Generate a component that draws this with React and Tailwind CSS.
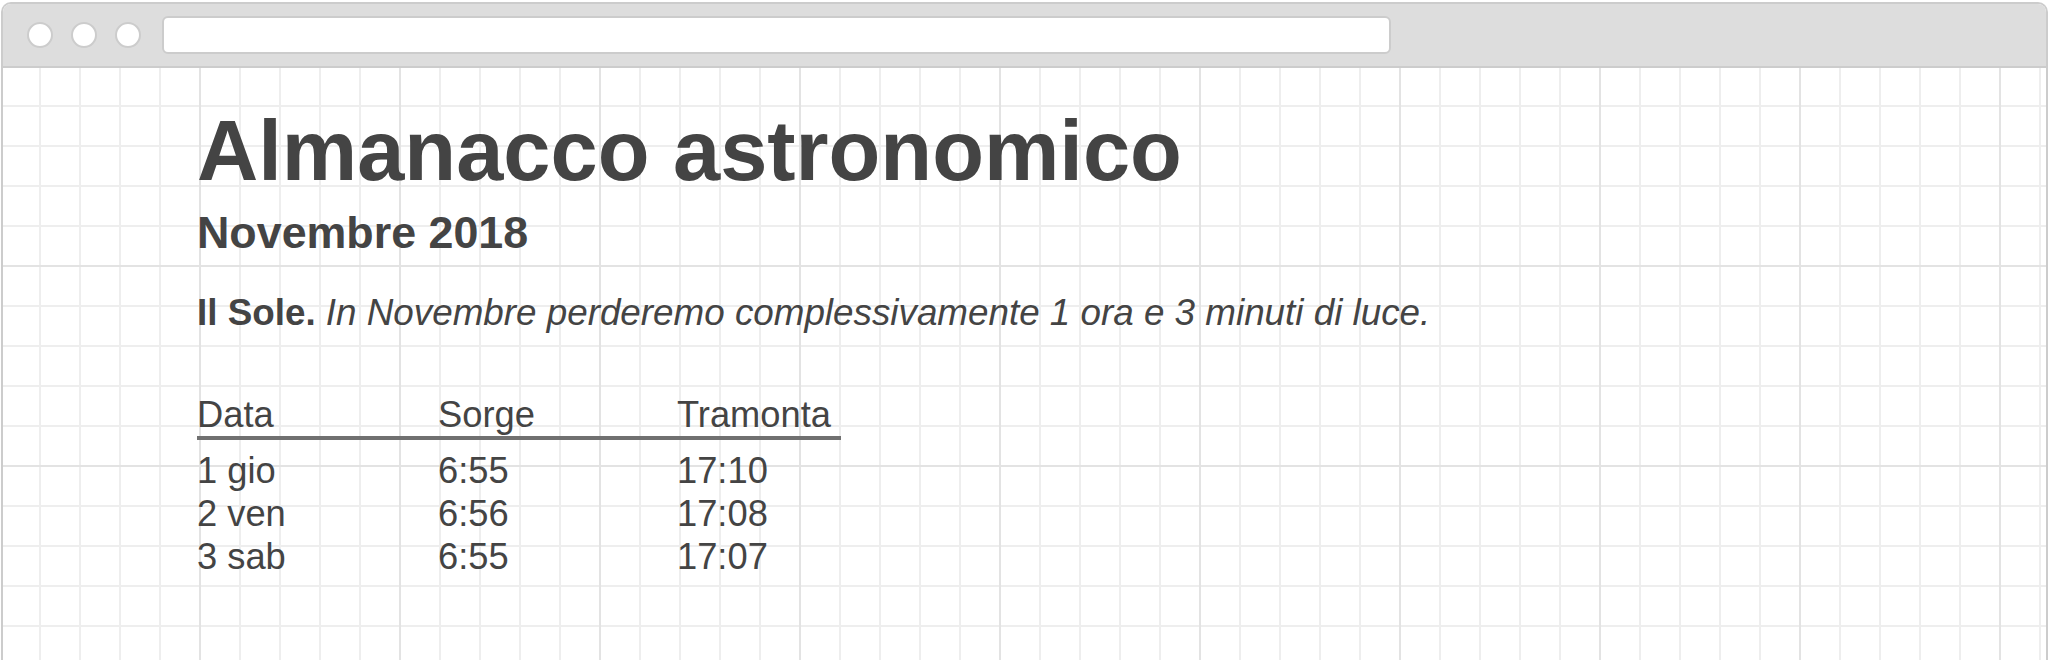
import React from 'react';

const rows = [
    { day: '1 gio', rise: '6:55', set: '17:10' },
    { day: '2 ven', rise: '6:56', set: '17:08' },
    { day: '3 sab', rise: '6:55', set: '17:07' },
];

function BrowserBar() {
    return (
        <div className="h-[64px] bg-[#dddddd] border-b-2 border-[#cccccc] flex items-center pl-[24px] pr-[655px] rounded-t-[8px]">
            <div className="flex gap-[18px]">
                <span className="w-[26px] h-[26px] rounded-full bg-white border-2 border-[#cccccc]" />
                <span className="w-[26px] h-[26px] rounded-full bg-white border-2 border-[#cccccc]" />
                <span className="w-[26px] h-[26px] rounded-full bg-white border-2 border-[#cccccc]" />
            </div>
            <div className="ml-[21px] flex-1 h-[38px] bg-white border-2 border-[#cccccc] rounded-[6px]" />
        </div>
    );
}

export default function App() {
    return (
        <div className="w-[2052px] h-[660px] overflow-hidden bg-white font-['Liberation_Sans',Arial,sans-serif]">
            <div className="mt-[2px] ml-px mr-[4px] h-[700px] border-2 border-b-0 border-[#cccccc] rounded-t-[10px] flex flex-col">
                <BrowserBar />
                <div className="flex-1 pl-[194px] pt-[32px] text-[#444444] bg-white bg-[linear-gradient(to_right,#e3e3e3_2px,transparent_2px),linear-gradient(to_bottom,#e3e3e3_2px,transparent_2px),linear-gradient(to_right,#eeeeee_2px,transparent_2px),linear-gradient(to_bottom,#eeeeee_2px,transparent_2px)] bg-[length:200px_200px,200px_200px,40px_40px,40px_40px] bg-[position:196px_197px,196px_197px,36px_37px,36px_37px]">
                    <h1 className="text-[84.8px] leading-[102px] font-bold">Almanacco astronomico</h1>
                    <h2 className="mt-[3px] text-[44.8px] leading-[54px] font-bold">Novembre 2018</h2>
                    <p className="mt-[32px] text-[36.8px] leading-[44px]">
                        <strong className="font-bold">Il Sole.</strong> <em className="italic">In Novembre perderemo complessivamente 1 ora e 3 minuti di luce.</em>
                    </p>
                    <table className="mt-[59px] w-[644px] text-left text-[36.3px] border-collapse">
                        <thead>
                            <tr className="border-b-[4px] border-[#707070]">
                                <th className="w-[241px] p-0 font-normal leading-[42px]">Data</th>
                                <th className="w-[239px] p-0 font-normal leading-[42px]">Sorge</th>
                                <th className="p-0 font-normal leading-[42px]">Tramonta</th>
                            </tr>
                        </thead>
                        <tbody>
                            <tr><td colSpan="3" className="h-[11px] p-0" /></tr>
                            {rows.map((r) => (
                                <tr key={r.day}>
                                    <td className="p-0 leading-[43px]">{r.day}</td>
                                    <td className="p-0 leading-[43px]">{r.rise}</td>
                                    <td className="p-0 leading-[43px]">{r.set}</td>
                                </tr>
                            ))}
                        </tbody>
                    </table>
                </div>
            </div>
        </div>
    );
}
